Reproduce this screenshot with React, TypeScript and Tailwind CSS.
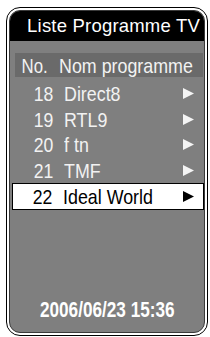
import React from 'react';

const channels = [
  { no: 18, name: 'Direct8' },
  { no: 19, name: 'RTL9' },
  { no: 20, name: 'f tn' },
  { no: 21, name: 'TMF' },
];

const Arrow = ({ color }: { color: string }) => (
  <svg width="11" height="11" viewBox="0 0 11 11" className="shrink-0">
    <polygon points="0,0 11,5.5 0,11" fill={color} />
  </svg>
);

// condensed look of the set-top box font
const Num = ({ children }: { children: React.ReactNode }) => (
  <span className="w-[40px] flex justify-end">
    <span className="inline-block origin-right scale-x-[0.84] whitespace-nowrap">{children}</span>
  </span>
);

const Name = ({ children }: { children: React.ReactNode }) => (
  <span className="ml-[11px] flex-1">
    <span className="inline-block origin-left scale-x-[0.85] whitespace-nowrap">{children}</span>
  </span>
);

const App = () => {
  return (
    <div
      className="w-[210px] h-[337px] bg-white pt-[7px] pl-[6px]"
      style={{ fontFamily: '"Liberation Sans", Arial, sans-serif' }}
    >
      <div className="w-[202px] h-[329px] border border-black rounded-[14px] bg-white p-[2px]">
        <div className="h-full flex flex-col rounded-[11px] border border-[#3a3a3a] bg-[#7f7f7f] overflow-hidden">
          <div className="h-[30px] shrink-0 bg-black flex items-center justify-end pr-[4px] text-white text-[18.5px] tracking-[0.2px] leading-none">
            Liste Programme TV
          </div>

          <div className="mt-[12px] ml-[5px] mr-[1px] h-[24px] bg-[#6a6a6a] flex items-center text-[21px] leading-none text-[#f2f2f2]">
            <span className="w-[38px] flex justify-end">
              <span className="inline-block origin-right scale-x-[0.8]">No.</span>
            </span>
            <Name>Nom programme</Name>
          </div>

          <div className="mt-[4px] flex flex-col">
            {channels.map((c) => (
              <div
                key={c.no}
                className="h-[25.5px] ml-[3px] mr-[1px] flex items-center text-[21px] leading-none text-[#f2f2f2]"
              >
                <Num>{c.no}</Num>
                <Name>{c.name}</Name>
                <span className="mr-[9px]">
                  <Arrow color="#f4f4f4" />
                </span>
              </div>
            ))}
            <div className="h-[27px] ml-[2px] mr-[0px] bg-white border border-black flex items-center text-[21px] leading-none text-black">
              <span className="w-[39px] flex justify-end">
                <span className="inline-block origin-right scale-x-[0.84]">22</span>
              </span>
              <Name>Ideal World</Name>
              <span className="mr-[9px]">
                <Arrow color="#000000" />
              </span>
            </div>
          </div>

          <div className="flex-1" />

          <div className="pb-[11px] flex justify-center text-white font-bold text-[22px] leading-[22px]">
            <span className="inline-block scale-x-[0.78] whitespace-nowrap">2006/06/23 15:36</span>
          </div>
        </div>
      </div>
    </div>
  );
};

export default App;
